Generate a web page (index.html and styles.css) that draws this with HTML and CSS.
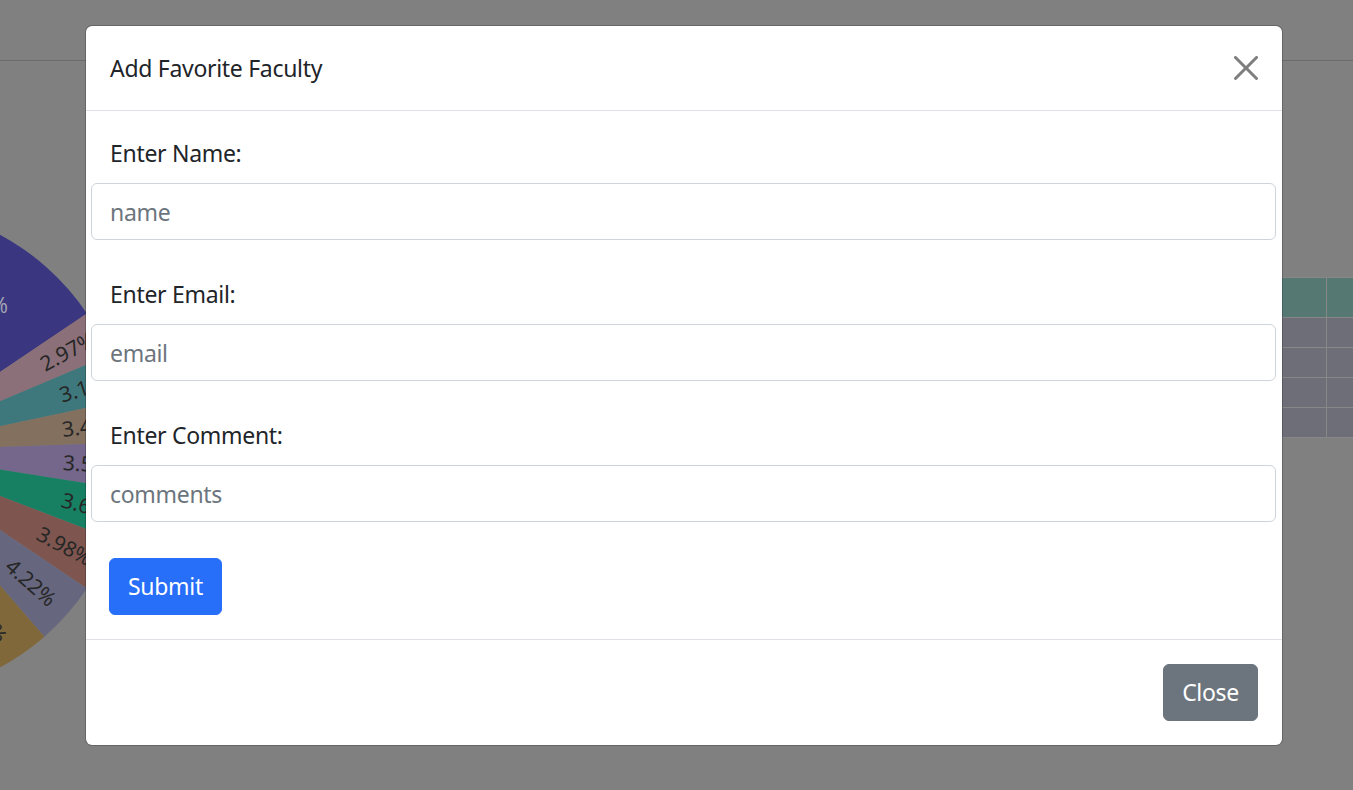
FILE: index.html
```html
<!DOCTYPE html>
<html lang="en">
<head>
<meta charset="utf-8">
<title>Faculty Dashboard</title>
<link rel="stylesheet" href="styles.css">
</head>
<body>
<div class="page">
  <header class="topbar"></header>
  <main class="dash">
    <svg class="pie" viewBox="0 0 600 600" width="600" height="600" aria-hidden="true">
      <path class="s-blue"     d="M300 300 L87 177 A246 246 0 0 1 503.9 162.4 Z"/>
      <path class="s-mauve"    d="M300 300 L503.9 162.4 A246 246 0 0 1 526.4 203.9 Z"/>
      <path class="s-teal"     d="M300 300 L526.4 203.9 A246 246 0 0 1 540.6 248.9 Z"/>
      <path class="s-tan"      d="M300 300 L540.6 248.9 A246 246 0 0 1 545.9 291.4 Z"/>
      <path class="s-lavender" d="M300 300 L545.9 291.4 A246 246 0 0 1 543 338.5 Z"/>
      <path class="s-green"    d="M300 300 L543 338.5 A246 246 0 0 1 529.7 388.2 Z"/>
      <path class="s-brown"    d="M300 300 L529.7 388.2 A246 246 0 0 1 503.9 437.6 Z"/>
      <path class="s-slate"    d="M300 300 L503.9 437.6 A246 246 0 0 1 461.4 485.7 Z"/>
      <path class="s-gold"     d="M300 300 L461.4 485.7 A246 246 0 0 1 415.5 517.2 Z"/>
      <path class="s-rose"     d="M300 300 L415.5 517.2 A246 246 0 0 1 278.5 545.1 Z"/>
      <path class="s-olive"    d="M300 300 L278.5 545.1 A246 246 0 0 1 87 177 Z"/>
      <g class="pie-labels">
        <text class="lbl-light" x="425" y="162">9.67%</text>
        <text x="484.5" y="199.8" transform="rotate(-28.5 484.5 199.8)">2.97%</text>
        <text x="505" y="235.3" transform="rotate(-17.5 505 235.3)">3.13%</text>
        <text x="508.4" y="274.4" transform="rotate(-7 508.4 274.4)">3.41%</text>
        <text x="509.6" y="312.8" transform="rotate(3.5 509.6 312.8)">3.52%</text>
        <text x="507.7" y="355.6" transform="rotate(15 507.7 355.6)">3.64%</text>
        <text x="481.8" y="394.6" transform="rotate(27.5 481.8 394.6)">3.98%</text>
        <text x="448.3" y="431.2" transform="rotate(41.5 448.3 431.2)">4.22%</text>
        <text x="403" y="465" transform="rotate(56 403 465)">4.46%</text>
      </g>
    </svg>
    <table class="stats">
      <thead>
        <tr><th class="c1"></th><th class="c2"></th></tr>
      </thead>
      <tbody>
        <tr><td class="c1"></td><td class="c2"></td></tr>
        <tr><td class="c1"></td><td class="c2"></td></tr>
        <tr><td class="c1"></td><td class="c2"></td></tr>
        <tr><td class="c1"></td><td class="c2"></td></tr>
      </tbody>
    </table>
  </main>
</div>

<div class="modal" role="dialog" aria-labelledby="favTitle">
  <div class="modal-content">
    <div class="modal-header">
      <h5 class="modal-title" id="favTitle">Add Favorite Faculty</h5>
      <button type="button" class="btn-close" aria-label="Close">
        <svg viewBox="0 0 16 16" width="24" height="24"><path d="M.293.293a1 1 0 0 1 1.414 0L8 6.586 14.293.293a1 1 0 1 1 1.414 1.414L9.414 8l6.293 6.293a1 1 0 0 1-1.414 1.414L8 9.414l-6.293 6.293a1 1 0 0 1-1.414-1.414L6.586 8 .293 1.707a1 1 0 0 1 0-1.414z"/></svg>
      </button>
    </div>
    <div class="modal-body">
      <form class="fav-form">
        <div class="field">
          <label for="favName">Enter Name:</label>
          <input id="favName" class="form-control" type="text" placeholder="name">
        </div>
        <div class="field">
          <label for="favEmail">Enter Email:</label>
          <input id="favEmail" class="form-control" type="email" placeholder="email">
        </div>
        <div class="field">
          <label for="favComment">Enter Comment:</label>
          <input id="favComment" class="form-control" type="text" placeholder="comments">
        </div>
        <button type="button" class="btn btn-primary">Submit</button>
      </form>
    </div>
    <div class="modal-footer">
      <button type="button" class="btn btn-secondary">Close</button>
    </div>
  </div>
</div>
</body>
</html>
```

FILE: styles.css
```css
* { box-sizing: border-box; }

html, body {
  margin: 0;
  height: 100%;
}

body {
  background: #808080;
  overflow: hidden;
  font-family: "Noto Sans", "Open Sans", sans-serif;
  color: #212529;
}

/* page behind the dialog, shaded by the backdrop */
.topbar {
  height: 61px;
  border-bottom: 1px solid #6b6b6b;
}

.dash {
  display: flex;
  align-items: flex-start;
}

.pie {
  flex: none;
  margin: 90px 0 0 -417px;
}

.s-blue     { fill: #3a3680; }
.s-mauve    { fill: #8b7079; }
.s-teal     { fill: #3e787c; }
.s-tan      { fill: #83705f; }
.s-lavender { fill: #74678b; }
.s-green    { fill: #178063; }
.s-brown    { fill: #7e564f; }
.s-slate    { fill: #66677f; }
.s-gold     { fill: #81683a; }
.s-rose     { fill: #7d5a68; }
.s-olive    { fill: #5d6b46; }

.pie-labels text {
  font-family: "Noto Sans", sans-serif;
  font-size: 21px;
  fill: #262626;
  text-anchor: middle;
  dominant-baseline: central;
}

.pie-labels .lbl-light {
  fill: #a3a3b4;
  text-anchor: end;
  dominant-baseline: auto;
}

.stats {
  flex: none;
  margin: 216px -97px 0 auto;
  border-collapse: collapse;
}

.stats th,
.stats td {
  padding: 0;
  border: 1px solid #878787;
}

.stats th { height: 40px; background: #557873; }
.stats td { height: 30px; background: #6e6e78; }
.stats .c1 { width: 227px; }
.stats .c2 { width: 123px; }

/* dialog */
.modal {
  position: absolute;
  top: 25px;
  left: 85px;
  width: 1198px;
}

.modal-content {
  background: #fff;
  border: 1px solid rgba(0, 0, 0, 0.2);
  border-radius: 7px;
  background-clip: padding-box;
}

.modal-header {
  display: flex;
  align-items: center;
  padding: 24px;
  border-bottom: 1px solid #dee2e6;
}

.modal-title {
  margin: 0;
  font-size: 23px;
  font-weight: 400;
  line-height: 36px;
  letter-spacing: -0.3px;
}

.btn-close {
  display: flex;
  align-items: center;
  justify-content: center;
  width: 48px;
  height: 48px;
  margin: -12px -12px -12px auto;
  padding: 0;
  border: 0;
  background: transparent;
  cursor: pointer;
}

.btn-close svg {
  fill: #000;
  opacity: 0.5;
}

.modal-body {
  padding: 24px;
}

.field {
  margin-bottom: 36px;
}

.field label {
  display: block;
  margin-bottom: 12px;
  font-size: 23px;
  line-height: 36px;
  letter-spacing: -0.3px;
}

.form-control {
  display: block;
  width: calc(100% + 37px);
  height: 57px;
  margin: 0 -18px 0 -19px;
  padding: 0 18px;
  font-family: inherit;
  font-size: 23px;
  letter-spacing: -0.3px;
  color: #212529;
  background: #fff;
  border: 1px solid #ced4da;
  border-radius: 6px;
}

.form-control::placeholder {
  color: #6c757d;
}

.btn {
  display: inline-block;
  height: 57px;
  padding: 0 18px;
  font-family: inherit;
  font-size: 23px;
  letter-spacing: -0.3px;
  line-height: 55px;
  color: #fff;
  border: 1px solid transparent;
  border-radius: 6px;
  cursor: pointer;
}

.btn-primary {
  margin-left: -1px;
  background: #276ef8;
  border-color: #276ef8;
}

.btn-secondary {
  background: #6c757d;
  border-color: #6c757d;
}

.modal-footer {
  display: flex;
  justify-content: flex-end;
  padding: 18px;
  border-top: 1px solid #dee2e6;
}

.modal-footer .btn {
  margin: 6px;
}
```
